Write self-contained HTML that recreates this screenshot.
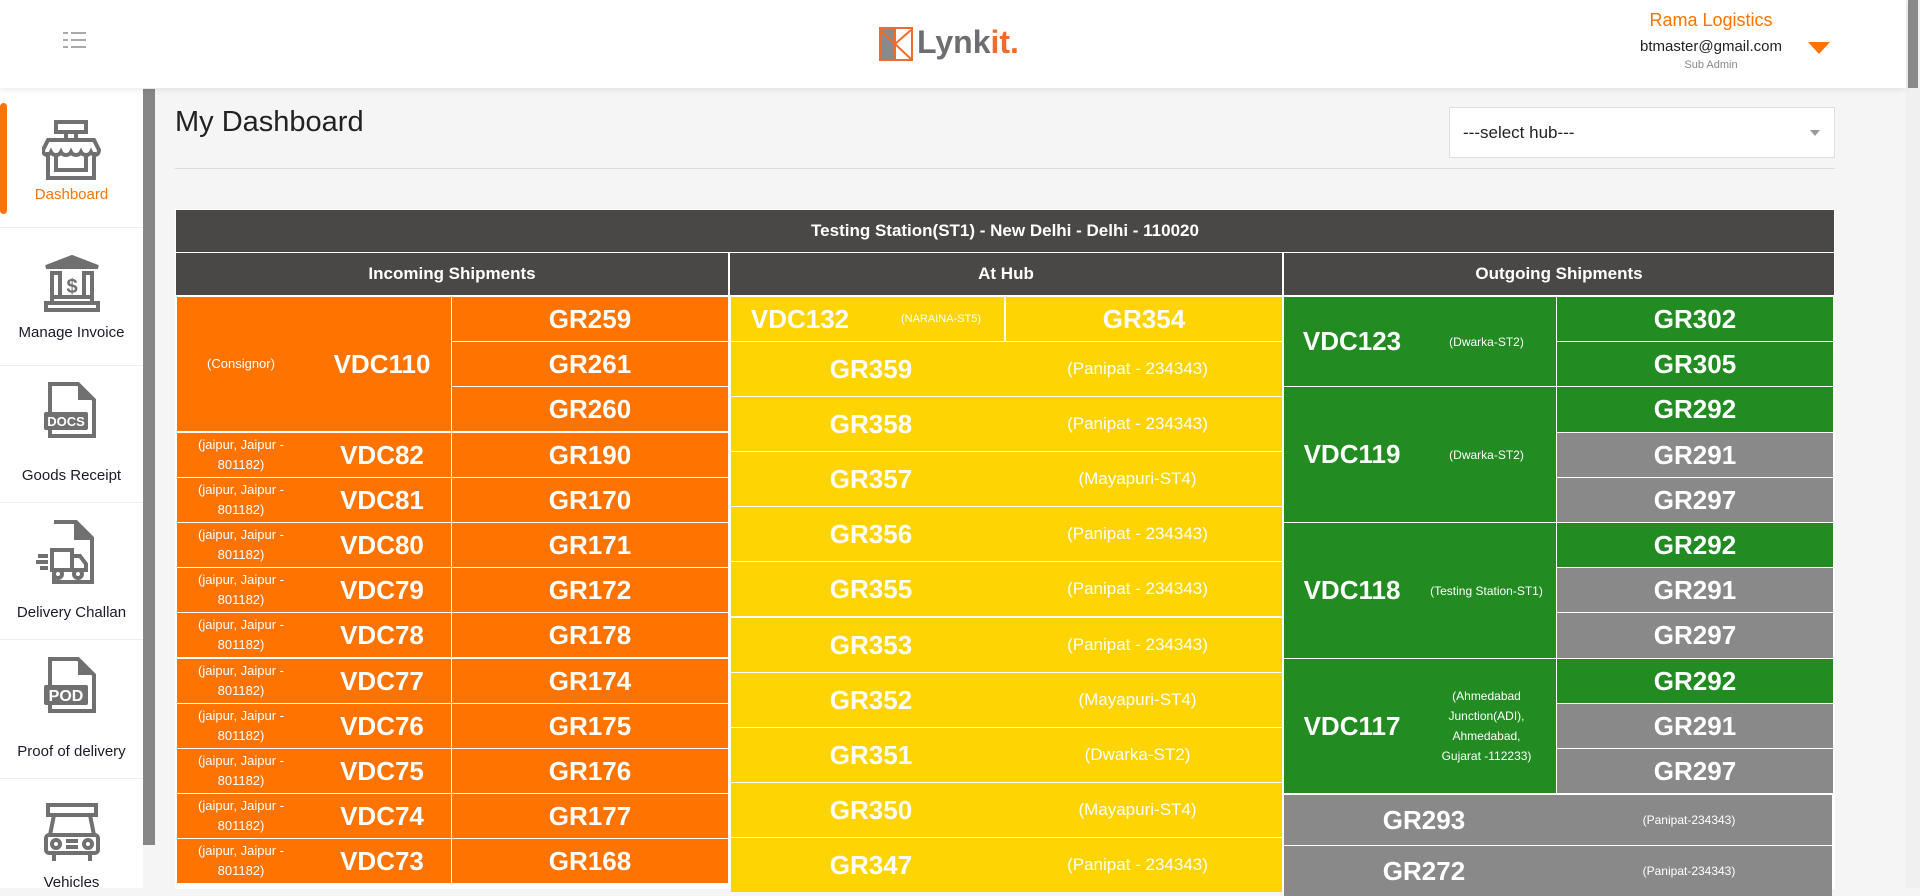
<!DOCTYPE html>
<html><head><meta charset="utf-8">
<style>
*{margin:0;padding:0;box-sizing:border-box}
body{width:1920px;height:888px;overflow:hidden;background:#f5f5f5;font-family:"Liberation Sans",sans-serif;position:relative}
.hdr{position:absolute;left:0;top:0;width:1906px;height:88px;background:#fff;box-shadow:0 2px 6px rgba(0,0,0,.08);z-index:3}
.vs{position:absolute;right:0;top:0;width:14px;height:888px;background:#f0f0f0}
.vs i{position:absolute;left:2px;top:0;width:10px;height:88px;background:#8a8a8a}
.side{position:absolute;left:0;top:88px;width:143px;height:800px;background:#fff}
.sb{position:absolute;left:143px;top:89px;width:12px;height:756px;background:#868686}
.item{position:absolute;left:0;width:143px;text-align:center;font-size:15px;color:#1a1a2a}
.sep{position:absolute;left:0;width:143px;height:1px;background:#eee}
.t{position:absolute;background:#4a4846}
.c{position:absolute;color:#fff;display:flex;align-items:center;justify-content:center;font-weight:bold;font-size:26px}
.o{background:#ff7300}.y{background:#ffd400}.g{background:#228b22}.gr{background:#898989}
.a{position:absolute;top:0;bottom:0;display:flex;align-items:center;justify-content:center;text-align:center;font-weight:normal;font-size:13px;line-height:20px}
.v{position:absolute;top:0;bottom:0;display:flex;align-items:center;justify-content:center}
.h{position:absolute;color:#fff;font-weight:bold;font-size:17px;display:flex;align-items:center;justify-content:center;background:#4a4846}
</style></head><body>
<div class="hdr">
 <svg style="position:absolute;left:63px;top:32px" width="24" height="16"><g fill="#aaa"><rect x="0" y="0" width="5" height="2"/><rect x="8" y="0" width="15" height="2"/><rect x="0" y="7" width="5" height="2"/><rect x="8" y="7" width="15" height="2"/><rect x="0" y="14" width="5" height="2"/><rect x="8" y="14" width="15" height="2"/></g></svg>
 <svg style="position:absolute;left:879px;top:27px" width="34" height="34"><rect x="1" y="1" width="32" height="32" fill="#fff" stroke="#f26b2b" stroke-width="2"/><polygon points="2,2 16,2 16,32 2,32" fill="#8a8a8a"/><line x1="16" y1="2" x2="16" y2="32" stroke="#f26b2b" stroke-width="2"/><line x1="2" y1="4" x2="16" y2="17" stroke="#f26b2b" stroke-width="2"/><line x1="16" y1="17" x2="32" y2="3" stroke="#f26b2b" stroke-width="2"/><line x1="16" y1="17" x2="32" y2="32" stroke="#f26b2b" stroke-width="2"/></svg>
 <div style="position:absolute;left:917px;top:24px;font-size:32px;font-weight:bold;color:#6d6e71;letter-spacing:0px">Lynk<span style="color:#f26b2b">it.</span></div>
 <div style="position:absolute;left:1600px;width:222px;top:10px;text-align:center;color:#ff7300;font-size:18px">Rama Logistics</div>
 <div style="position:absolute;left:1600px;width:222px;top:38px;text-align:center;color:#222;font-size:15px">btmaster@gmail.com</div>
 <div style="position:absolute;left:1600px;width:222px;top:59px;text-align:center;color:#888;font-size:11px">Sub Admin</div>
 <svg style="position:absolute;left:1808px;top:42px" width="22" height="13"><polygon points="0,0 22,0 11,12" fill="#ff7300"/></svg>
</div>
<div class="vs"><i></i></div>
<div class="side">
 <div style="position:absolute;left:0;top:15px;width:7px;height:111px;background:#ff7300;border-radius:4px"></div>
</div>
<div class="sb"></div>
<svg style="position:absolute;left:42px;top:120px" width="60" height="60" fill="none" stroke="#707070" stroke-width="4"><rect x="14" y="2" width="30" height="10"/><rect x="24" y="12" width="10" height="8"/><path d="M6 20h46l5 10c0 6-6 6-8 2c-2 4-8 4-10 0c-2 4-8 4-10 0c-2 4-8 4-10 0c-2 4-8 4-10 0c-2 4-8 4-8-2z"/><path d="M6 32v26h46V32M14 34v16h30V34"/></svg>
<div class="item" style="top:186px;color:#ff7300">Dashboard</div>
<div class="sep" style="top:227px"></div>
<svg style="position:absolute;left:42px;top:253px" width="60" height="60" fill="none" stroke="#707070" stroke-width="4"><path d="M4 14L30 4l26 10z" fill="#707070"/><rect x="10" y="20" width="8" height="24"/><rect x="42" y="20" width="8" height="24"/><text x="30" y="40" text-anchor="middle" font-size="20" font-weight="bold" fill="#707070" stroke="none" font-family="Liberation Sans">$</text><rect x="10" y="44" width="40" height="6"/><rect x="4" y="50" width="52" height="7"/></svg>
<div class="item" style="top:324px">Manage Invoice</div>
<div class="sep" style="top:365px"></div>
<svg style="position:absolute;left:42px;top:380px" width="60" height="62"><path d="M8 4h28l16 16v36H8z" fill="none" stroke="#707070" stroke-width="4"/><path d="M36 4v16h16" fill="#707070"/><rect x="2" y="32" width="44" height="18" rx="2" fill="#707070"/><text x="24" y="46" text-anchor="middle" font-size="13" font-weight="bold" fill="#fff" font-family="Liberation Sans">DOCS</text></svg>
<div class="item" style="top:467px">Goods Receipt</div>
<div class="sep" style="top:502px"></div>
<svg style="position:absolute;left:36px;top:518px" width="66" height="70" fill="none" stroke="#707070" stroke-width="4"><path d="M18 4h22l16 16v44H18v-8"/><path d="M40 4v16h16" fill="#707070"/><path d="M16 32h20v20H16zM36 38h8l6 8v6H36z"/><circle cx="22" cy="56" r="4"/><circle cx="42" cy="56" r="4"/><path d="M2 38h10M0 44h12M4 50h8"/></svg>
<div class="item" style="top:604px">Delivery Challan</div>
<div class="sep" style="top:639px"></div>
<svg style="position:absolute;left:42px;top:655px" width="60" height="62"><path d="M8 4h28l16 16v36H8z" fill="none" stroke="#707070" stroke-width="4"/><path d="M36 4v16h16" fill="#707070"/><rect x="2" y="30" width="44" height="20" rx="2" fill="#707070"/><text x="24" y="46" text-anchor="middle" font-size="16" font-weight="bold" fill="#fff" font-family="Liberation Sans">POD</text></svg>
<div class="item" style="top:743px">Proof of delivery</div>
<div class="sep" style="top:778px"></div>
<svg style="position:absolute;left:42px;top:803px" width="60" height="60" fill="none" stroke="#707070" stroke-width="4"><path d="M6 2h48v10H6zM12 12l-4 20h44l-4-20"/><rect x="4" y="32" width="52" height="18" rx="3"/><circle cx="14" cy="41" r="4"/><circle cx="46" cy="41" r="4"/><path d="M24 38h12M24 44h12M12 50v8M48 50v8"/></svg>
<div class="item" style="top:874px">Vehicles</div>

<div style="position:absolute;left:175px;top:106px;font-size:29px;color:#222;font-weight:300">My Dashboard</div>
<div style="position:absolute;left:1449px;top:107px;width:386px;height:51px;background:#fff;border:1px solid #ddd;font-size:17px;color:#222;padding:15px 0 0 13px">---select hub---<svg style="position:absolute;right:14px;top:22px" width="10" height="6"><polygon points="0,0 10,0 5,6" fill="#999"/></svg></div>
<div style="position:absolute;left:175px;top:168px;width:1660px;height:1px;background:#ddd"></div>

<div class="t" style="left:175px;top:209px;width:1660px;height:680px;background:#fff"></div>
<div class="h" style="left:176px;top:210px;width:1658px;height:42px">Testing Station(ST1) - New Delhi - Delhi - 110020</div>
<div class="h" style="left:176px;top:253px;width:552px;height:42px">Incoming Shipments</div>
<div class="h" style="left:730px;top:253px;width:552px;height:42px">At Hub</div>
<div class="h" style="left:1284px;top:253px;width:550px;height:42px">Outgoing Shipments</div>

<!-- Incoming -->
<div class="c o" style="left:177px;top:297px;width:274px;height:134px"><div class="a" style="left:0;width:128px">(Consignor)</div><div class="v" style="left:135px;width:140px">VDC110</div></div>
<div class="c o" style="left:452px;top:297px;width:276px;height:44px">GR259</div>
<div class="c o" style="left:452px;top:342px;width:276px;height:44px">GR261</div>
<div class="c o" style="left:452px;top:387px;width:276px;height:44px">GR260</div>

<div class="c o" style="left:177px;top:433px;width:274px;height:44px"><div class="a" style="left:0;width:128px">(jaipur, Jaipur -<br>801182)</div><div class="v" style="left:135px;width:140px">VDC82</div></div><div class="c o" style="left:452px;top:433px;width:276px;height:44px">GR190</div>
<div class="c o" style="left:177px;top:478px;width:274px;height:44px"><div class="a" style="left:0;width:128px">(jaipur, Jaipur -<br>801182)</div><div class="v" style="left:135px;width:140px">VDC81</div></div><div class="c o" style="left:452px;top:478px;width:276px;height:44px">GR170</div>
<div class="c o" style="left:177px;top:523px;width:274px;height:44px"><div class="a" style="left:0;width:128px">(jaipur, Jaipur -<br>801182)</div><div class="v" style="left:135px;width:140px">VDC80</div></div><div class="c o" style="left:452px;top:523px;width:276px;height:44px">GR171</div>
<div class="c o" style="left:177px;top:568px;width:274px;height:44px"><div class="a" style="left:0;width:128px">(jaipur, Jaipur -<br>801182)</div><div class="v" style="left:135px;width:140px">VDC79</div></div><div class="c o" style="left:452px;top:568px;width:276px;height:44px">GR172</div>
<div class="c o" style="left:177px;top:613px;width:274px;height:44px"><div class="a" style="left:0;width:128px">(jaipur, Jaipur -<br>801182)</div><div class="v" style="left:135px;width:140px">VDC78</div></div><div class="c o" style="left:452px;top:613px;width:276px;height:44px">GR178</div>
<div class="c o" style="left:177px;top:659px;width:274px;height:44px"><div class="a" style="left:0;width:128px">(jaipur, Jaipur -<br>801182)</div><div class="v" style="left:135px;width:140px">VDC77</div></div><div class="c o" style="left:452px;top:659px;width:276px;height:44px">GR174</div>
<div class="c o" style="left:177px;top:704px;width:274px;height:44px"><div class="a" style="left:0;width:128px">(jaipur, Jaipur -<br>801182)</div><div class="v" style="left:135px;width:140px">VDC76</div></div><div class="c o" style="left:452px;top:704px;width:276px;height:44px">GR175</div>
<div class="c o" style="left:177px;top:749px;width:274px;height:44px"><div class="a" style="left:0;width:128px">(jaipur, Jaipur -<br>801182)</div><div class="v" style="left:135px;width:140px">VDC75</div></div><div class="c o" style="left:452px;top:749px;width:276px;height:44px">GR176</div>
<div class="c o" style="left:177px;top:794px;width:274px;height:44px"><div class="a" style="left:0;width:128px">(jaipur, Jaipur -<br>801182)</div><div class="v" style="left:135px;width:140px">VDC74</div></div><div class="c o" style="left:452px;top:794px;width:276px;height:44px">GR177</div>
<div class="c o" style="left:177px;top:839px;width:274px;height:44px"><div class="a" style="left:0;width:128px">(jaipur, Jaipur -<br>801182)</div><div class="v" style="left:135px;width:140px">VDC73</div></div><div class="c o" style="left:452px;top:839px;width:276px;height:44px">GR168</div>

<!-- At hub -->
<div class="c y" style="left:731px;top:297px;width:273px;height:44px"><div class="v" style="left:14px;width:110px">VDC132</div><div class="a" style="left:150px;width:120px;font-size:11px">(NARAINA-ST5)</div></div>
<div class="c y" style="left:1006px;top:297px;width:276px;height:44px">GR354</div>
<div class="c y" style="left:731px;top:342px;width:551px;height:54px"><div class="v" style="left:60px;width:160px">GR359</div><div class="a" style="left:300px;width:213px;font-size:17px">(Panipat - 234343)</div></div>
<div class="c y" style="left:731px;top:397px;width:551px;height:54px"><div class="v" style="left:60px;width:160px">GR358</div><div class="a" style="left:300px;width:213px;font-size:17px">(Panipat - 234343)</div></div>
<div class="c y" style="left:731px;top:452px;width:551px;height:54px"><div class="v" style="left:60px;width:160px">GR357</div><div class="a" style="left:300px;width:213px;font-size:17px">(Mayapuri-ST4)</div></div>
<div class="c y" style="left:731px;top:507px;width:551px;height:54px"><div class="v" style="left:60px;width:160px">GR356</div><div class="a" style="left:300px;width:213px;font-size:17px">(Panipat - 234343)</div></div>
<div class="c y" style="left:731px;top:562px;width:551px;height:54px"><div class="v" style="left:60px;width:160px">GR355</div><div class="a" style="left:300px;width:213px;font-size:17px">(Panipat - 234343)</div></div>
<div class="c y" style="left:731px;top:618px;width:551px;height:54px"><div class="v" style="left:60px;width:160px">GR353</div><div class="a" style="left:300px;width:213px;font-size:17px">(Panipat - 234343)</div></div>
<div class="c y" style="left:731px;top:673px;width:551px;height:54px"><div class="v" style="left:60px;width:160px">GR352</div><div class="a" style="left:300px;width:213px;font-size:17px">(Mayapuri-ST4)</div></div>
<div class="c y" style="left:731px;top:728px;width:551px;height:54px"><div class="v" style="left:60px;width:160px">GR351</div><div class="a" style="left:300px;width:213px;font-size:17px">(Dwarka-ST2)</div></div>
<div class="c y" style="left:731px;top:783px;width:551px;height:54px"><div class="v" style="left:60px;width:160px">GR350</div><div class="a" style="left:300px;width:213px;font-size:17px">(Mayapuri-ST4)</div></div>
<div class="c y" style="left:731px;top:838px;width:551px;height:54px"><div class="v" style="left:60px;width:160px">GR347</div><div class="a" style="left:300px;width:213px;font-size:17px">(Panipat - 234343)</div></div>

<!-- Outgoing -->
<div class="c g" style="left:1284px;top:297px;width:272px;height:89px"><div class="v" style="left:8px;width:120px">VDC123</div><div class="a" style="left:135px;width:135px;font-size:12px">(Dwarka-ST2)</div></div>
<div class="c g" style="left:1557px;top:297px;width:276px;height:44px">GR302</div>
<div class="c g" style="left:1557px;top:342px;width:276px;height:44px">GR305</div>
<div class="c g" style="left:1284px;top:387px;width:272px;height:135px"><div class="v" style="left:8px;width:120px">VDC119</div><div class="a" style="left:135px;width:135px;font-size:12px">(Dwarka-ST2)</div></div>
<div class="c g" style="left:1557px;top:387px;width:276px;height:45px">GR292</div>
<div class="c gr" style="left:1557px;top:433px;width:276px;height:44px">GR291</div>
<div class="c gr" style="left:1557px;top:478px;width:276px;height:44px">GR297</div>
<div class="c g" style="left:1284px;top:523px;width:272px;height:135px"><div class="v" style="left:8px;width:120px">VDC118</div><div class="a" style="left:135px;width:135px;font-size:12px">(Testing Station-ST1)</div></div>
<div class="c g" style="left:1557px;top:523px;width:276px;height:44px">GR292</div>
<div class="c gr" style="left:1557px;top:568px;width:276px;height:44px">GR291</div>
<div class="c gr" style="left:1557px;top:613px;width:276px;height:45px">GR297</div>
<div class="c g" style="left:1284px;top:659px;width:272px;height:134px"><div class="v" style="left:8px;width:120px">VDC117</div><div class="a" style="left:135px;width:135px;font-size:12px">(Ahmedabad<br>Junction(ADI),<br>Ahmedabad,<br>Gujarat -112233)</div></div>
<div class="c g" style="left:1557px;top:659px;width:276px;height:44px">GR292</div>
<div class="c gr" style="left:1557px;top:704px;width:276px;height:44px">GR291</div>
<div class="c gr" style="left:1557px;top:749px;width:276px;height:44px">GR297</div>
<div class="c gr" style="left:1284px;top:795px;width:548px;height:50px"><div class="v" style="left:60px;width:160px">GR293</div><div class="a" style="left:330px;width:150px;font-size:12px">(Panipat-234343)</div></div>
<div class="c gr" style="left:1284px;top:846px;width:548px;height:50px"><div class="v" style="left:60px;width:160px">GR272</div><div class="a" style="left:330px;width:150px;font-size:12px">(Panipat-234343)</div></div>
</body></html>
